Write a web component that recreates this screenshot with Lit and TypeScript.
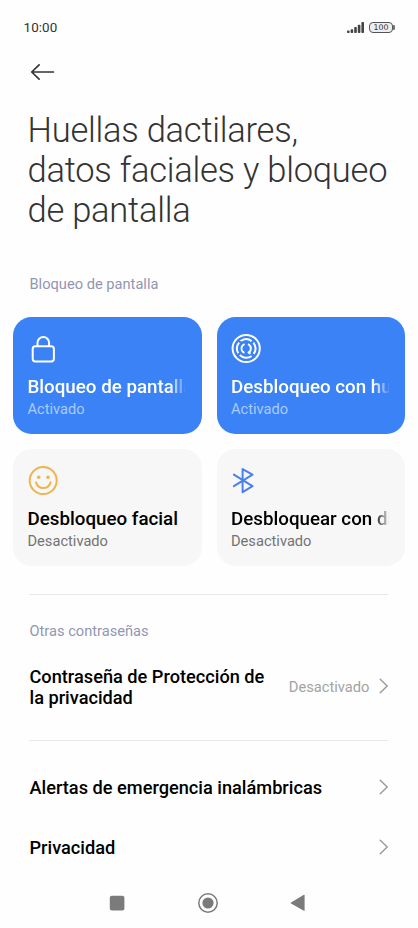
import { LitElement, html, css, svg, nothing } from "lit";
import { customElement, property } from "lit/decorators.js";

const lockIcon = svg`
  <rect x="4.7" y="14.2" width="21.2" height="15.2" rx="2.6"></rect>
  <path d="M9.5 14v-3.2a5.8 5.8 0 0 1 11.6 0V14"></path>`;

const fingerprintIcon = svg`
  <circle cx="15.2" cy="16.5" r="13.6"></circle>
  <g class="cut">
    <circle cx="15.2" cy="16.5" r="9.2" pathLength="360" stroke-dasharray="72 15 75 18 80 15 70 15" transform="rotate(-126 15.2 16.5)"></circle>
    <circle cx="15.2" cy="16.5" r="4.7" pathLength="360" stroke-dasharray="138 42" transform="rotate(112 15.2 16.5)"></circle>
    <path d="M17.4 19.6l1.9 2.2"></path>
  </g>`;

const faceIcon = svg`
  <circle cx="15.2" cy="16.6" r="13.5"></circle>
  <path d="M8 18.4c1.2 3.8 4 5.7 7.3 5.7s6.1-1.9 7.3-5.7"></path>
  <circle class="dot" cx="10.7" cy="13.3" r="1.8"></circle>
  <circle class="dot" cx="20" cy="13.3" r="1.8"></circle>`;

const bluetoothIcon = svg`
  <path d="M2.9 10.6l18.6 11.6-9.9 6V5.1l9.9 5.6L2.9 22.2"></path>`;

@customElement("status-bar")
class StatusBar extends LitElement {
  static styles = css`
    :host { display: flex; justify-content: space-between; align-items: center; height: 54px; padding: 0 23px 0 23.5px; box-sizing: border-box; }
    .time { font-size: 13.4px; line-height: 16px; padding-top: 1px; font-weight: 400; color: #333; letter-spacing: 0.1px; }
    .system { display: flex; align-items: center; gap: 5px; }
    .signal { display: block; width: 17px; height: 11px; fill: #444; }
    .battery { display: flex; align-items: center; }
    .cell { width: 24px; height: 11px; box-sizing: border-box; border: 1.2px solid #555; border-radius: 4px; background: #eee; font-family: "DejaVu Sans", sans-serif; font-size: 7.8px; line-height: 9.6px; font-weight: 400; text-align: center; color: #333; }
    .tip { width: 2px; height: 5px; border-radius: 0 1px 1px 0; background: #777; }
  `;
  render() {
    return html`
      <span class="time">10:00</span>
      <span class="system">
        <svg class="signal" viewBox="0 0 17 11">
          <rect x="0" y="8.6" width="2.6" height="2.4" rx=".8"></rect>
          <rect x="3.6" y="7.2" width="2.6" height="3.8" rx=".8"></rect>
          <rect x="7.2" y="5" width="2.6" height="6" rx=".8"></rect>
          <rect x="10.8" y="2.8" width="2.6" height="8.2" rx=".8"></rect>
          <rect x="14.4" y="0" width="2.6" height="11" rx=".8"></rect>
        </svg>
        <span class="battery"><span class="cell">100</span><span class="tip"></span></span>
      </span>`;
  }
}

@customElement("unlock-card")
class UnlockCard extends LitElement {
  @property() heading = "";
  @property() state = "";
  @property() tone = "";
  @property({ attribute: false }) icon: unknown = nothing;
  static styles = css`
    :host { display: block; min-width: 0; }
    .card { height: 117px; box-sizing: border-box; padding: 15px 16.5px 0 14.5px; border-radius: 18.5px; background: #f7f7f7; color: #000; }
    .icon { display: block; width: 32px; height: 32px; margin-bottom: 12px; fill: none; stroke: currentColor; stroke-width: 2; stroke-linecap: round; stroke-linejoin: round; }
    .icon .dot { fill: currentColor; stroke: none; }
    .icon .cut { stroke-linecap: butt; }
    .title { font-size: 18.75px; line-height: 23px; font-weight: 500; white-space: nowrap; overflow: hidden; -webkit-mask-image: linear-gradient(to right, #000 calc(100% - 16px), transparent calc(100% + 2px)); }
    .state { margin-top: 1px; font-size: 14.65px; line-height: 18px; color: #737373; }
    .active { background: #3b82f6; color: #fff; }
    .active .state { color: #a9cbfc; }
    .face .icon { color: #f0b44e; }
    .bluetooth .icon { color: #4a80ee; }
    .face .title { -webkit-mask-image: none; }
  `;
  render() {
    return html`<div class="card ${this.tone}">
      <svg class="icon" viewBox="0 0 32 32">${this.icon}</svg>
      <div class="title">${this.heading}</div>
      <div class="state">${this.state}</div>
    </div>`;
  }
}

@customElement("setting-row")
class SettingRow extends LitElement {
  @property() label = "";
  @property() value = "";
  static styles = css`
    :host { display: flex; align-items: center; box-sizing: border-box; padding: 0 29.5px; }
    .label { width: 240px; flex: 1 0 auto; max-width: 300px; font-size: 18.2px; line-height: 21.3px; font-weight: 500; color: #000; }
    .short { max-width: 240px; }
    .value { margin-left: auto; margin-right: 9px; font-size: 14.7px; line-height: 20px; color: #a3a3a3; }
    .chevron { display: block; flex: none; width: 10px; height: 16px; margin: 0 0 1.5px auto; fill: none; stroke: #999; stroke-width: 1.4; stroke-linecap: round; }
    .value + .chevron { margin-left: 0; }
  `;
  render() {
    return html`
      <span class="label ${this.value ? "short" : ""}">${this.label}</span>
      ${this.value ? html`<span class="value">${this.value}</span>` : nothing}
      <svg class="chevron" viewBox="0 0 10 16"><path d="M1.2 1.2L8.2 8l-7 6.8"></path></svg>`;
  }
}

@customElement("app-root")
class AppRoot extends LitElement {
  static styles = css`
    :host { display: flex; flex-direction: column; height: 928px; overflow: hidden; background: #fefefe; font-family: Roboto, "Liberation Sans", sans-serif; }
    .back { display: block; width: 26px; height: 18px; margin: 9px 0 0 29px; fill: none; stroke: #333; stroke-width: 1.7; stroke-linecap: round; stroke-linejoin: round; }
    h1 { margin: 29px 0 0 27.5px; font-size: 34.5px; letter-spacing: -0.24px; line-height: 40px; font-weight: 300; color: #333; white-space: nowrap; }
    h2 { margin: 0 0 0 29.5px; font-size: 14.65px; line-height: 20px; font-weight: 400; color: #9296b1; }
    .lock { margin-top: 44px; }
    .cards { display: grid; grid-template-columns: 1fr 1fr; gap: 15px; margin: 23px 13px 0; }
    .divider { height: 1px; margin: 28px 30px 0 29px; background: #e8e8e8; flex: none; }
    .other { margin-top: 26px; }
    .password { height: 62px; margin-top: 15px; }
    .password + .divider { margin-top: 22px; }
    .alerts { height: 60px; margin-top: 17px; }
    .privacy { height: 59px; }
    .nav { display: flex; align-items: center; justify-content: space-between; margin: 16px 112px 0 109px; height: 20px; fill: #7b7b7b; }
    .nav svg { display: block; }
  `;
  render() {
    return html`
      <status-bar></status-bar>
      <svg class="back" viewBox="0 0 26 18"><path d="M24.4 9H2.9M10.1 1.9L2.7 9l7.4 7.1"></path></svg>
      <h1>Huellas dactilares,<br />datos faciales y bloqueo<br />de pantalla</h1>
      <h2 class="lock">Bloqueo de pantalla</h2>
      <div class="cards">
        <unlock-card tone="active" heading="Bloqueo de pantalla" state="Activado" .icon=${lockIcon}></unlock-card>
        <unlock-card tone="active" heading="Desbloqueo con huella" state="Activado" .icon=${fingerprintIcon}></unlock-card>
        <unlock-card tone="face" heading="Desbloqueo facial" state="Desactivado" .icon=${faceIcon}></unlock-card>
        <unlock-card tone="bluetooth" heading="Desbloquear con dispositivo" state="Desactivado" .icon=${bluetoothIcon}></unlock-card>
      </div>
      <div class="divider"></div>
      <h2 class="other">Otras contraseñas</h2>
      <setting-row class="password" label="Contraseña de Protección de la privacidad" value="Desactivado"></setting-row>
      <div class="divider"></div>
      <setting-row class="alerts" label="Alertas de emergencia inalámbricas"></setting-row>
      <setting-row class="privacy" label="Privacidad"></setting-row>
      <div class="nav">
        <svg width="16" height="20" viewBox="0 0 16 20"><rect x=".8" y="2.8" width="14.6" height="14.6" rx="2"></rect></svg>
        <svg width="20" height="20" viewBox="0 0 20 20"><circle cx="10" cy="10" r="9.2" fill="none" stroke="#7b7b7b" stroke-width="1.5"></circle><circle cx="10" cy="10" r="5.6"></circle></svg>
        <svg width="16" height="20" viewBox="0 0 16 20"><path d="M14.6 2.3v15.2q0 .7-.7.3L1 10.5q-.7-.5 0-1L13.9 1.8q.7-.3.7.5z"></path></svg>
      </div>`;
  }
}
